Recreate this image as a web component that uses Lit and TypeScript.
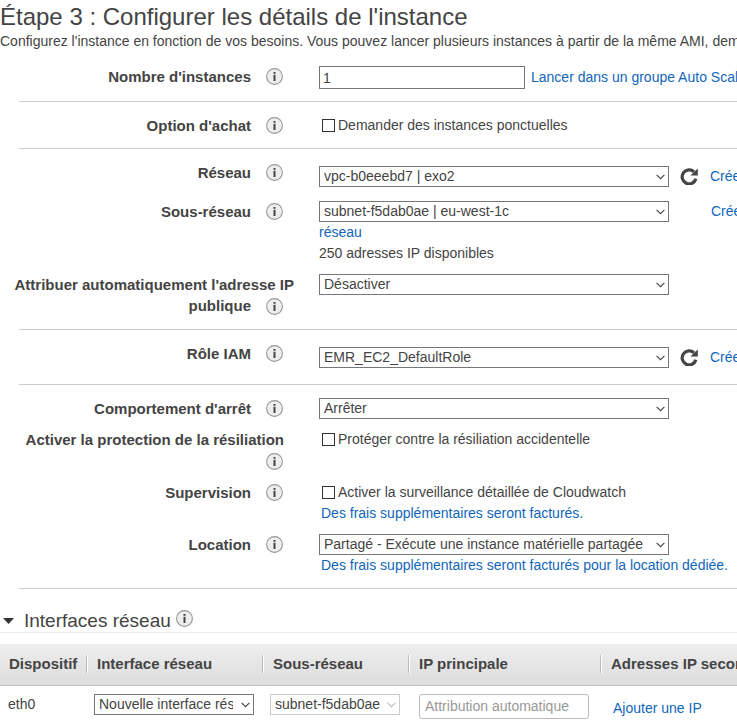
import { LitElement, html, css, svg, nothing, type TemplateResult } from "lit";
import { customElement, property } from "lit/decorators.js";

const chevron = html`<svg class="chevron" viewBox="0 0 9 6" aria-hidden="true">
  <path d="M0.6 0.8 L4.5 4.7 L8.4 0.8" fill="none" stroke="currentColor" stroke-width="1.1" />
</svg>`;

const infoButton = html`<button class="info" type="button" aria-label="Informations">
  <svg viewBox="0 0 17 17" aria-hidden="true">
    <circle cx="8.5" cy="8.5" r="7.9" fill="#eeeeee" stroke="#999999" stroke-width="1.1" />
    <rect x="7.5" y="4" width="2" height="1.8" fill="#444444" />
    <rect x="7.5" y="6.8" width="2" height="6.2" fill="#444444" />
  </svg>
</button>`;

const refreshButton = html`<button class="refresh" type="button" aria-label="Actualiser">
  <svg viewBox="0 0 18 17" aria-hidden="true">
    <path d="M15.9 10.8 A7 7 0 1 1 14 3.8" fill="none" stroke="#444444" stroke-width="3.2" />
    <path d="M17.8 0.4 V7.4 H10.4 Z" fill="#444444" />
  </svg>
</button>`;

const controlStyles = css`
  * {
    box-sizing: border-box;
  }
  a {
    color: #1166bb;
    text-decoration: none;
  }
  button {
    margin: 0;
    padding: 0;
    border: 0;
    background: none;
    color: inherit;
    font: inherit;
    cursor: pointer;
  }
  svg {
    display: block;
  }
  .info {
    flex: none;
    width: 17px;
    height: 17px;
  }
  .info svg {
    width: 17px;
    height: 17px;
  }
  .select {
    position: relative;
    display: block;
    flex: none;
  }
  select {
    display: block;
    width: 100%;
    height: 21px;
    margin: 0;
    padding: 0 20px 0 4px;
    border: 1px solid #777777;
    border-radius: 0;
    background: #ffffff;
    color: #444444;
    font: inherit;
    line-height: 19px;
    appearance: none;
  }
  .chevron {
    position: absolute;
    top: 8px;
    right: 4px;
    width: 9px;
    height: 6px;
    color: #444444;
    pointer-events: none;
  }
  select:disabled {
    padding-right: 16px;
    border-color: #cccccc;
    opacity: 1;
  }
  select:disabled + .chevron {
    color: #bbbbbb;
  }
`;

@customElement("form-row")
class FormRow extends LitElement {
  @property() label = "";
  @property({ type: Boolean }) offset = false;

  static styles = [
    controlStyles,
    css`
      :host {
        display: grid;
        grid-template-columns: 275px minmax(0, 1fr);
        column-gap: 25px;
      }
      .caption {
        display: flex;
        flex-wrap: wrap;
        justify-content: flex-end;
        align-items: flex-start;
        font-size: 15px;
        font-weight: bold;
        text-align: right;
        white-space: nowrap;
      }
      .text {
        margin-right: 10px;
      }
      .long {
        margin-right: 0;
      }
      .last {
        margin-right: 15px;
      }
      .mark {
        display: flex;
        height: 21px;
        align-items: center;
        margin-right: 11px;
      }
      .wrapped {
        height: 22px;
      }
      .field {
        white-space: nowrap;
      }
      .field.offset {
        padding: 4px 0;
      }
    `,
  ];

  render() {
    const lines = this.label.split("|");
    const wrapped = lines.length > 1;
    return html`<div class="caption">
        ${lines.map((line, i) => {
          if (line === "") return nothing;
          const last = i === lines.length - 1;
          const kind = last ? "text last" : lines[i + 1] ? "text long" : "text";
          return html`<span class=${kind}>${line}</span>`;
        })}
        <span class=${wrapped ? "mark wrapped" : "mark"}>${infoButton}</span>
      </div>
      <div class=${this.offset ? "field offset" : "field"}><slot></slot></div>`;
  }
}

@customElement("app-root")
class AppRoot extends LitElement {
  static styles = [
    controlStyles,
    css`
      :host {
        display: block;
        overflow: hidden;
        background: #ffffff;
        color: #444444;
        font: 14px/21px "Liberation Sans", Arial, sans-serif;
      }
      h1 {
        margin: 0;
        padding-top: 2px;
        font-size: 24px;
        line-height: 30px;
        font-weight: normal;
        white-space: nowrap;
      }
      .intro {
        margin: 0;
        padding-bottom: 2px;
        line-height: 19px;
        white-space: nowrap;
      }
      .group {
        display: grid;
        row-gap: 10px;
        margin-left: 19px;
        padding: 13px 0 12px;
        border-bottom: 1px solid #cccccc;
      }
      .line {
        display: flex;
        align-items: center;
      }
      .wide {
        width: 350px;
      }
      .count {
        flex: none;
        width: 206px;
        height: 23px;
        margin: 0 6px 0 0;
        padding: 0 3px;
        border: 1px solid #777777;
        background: #ffffff;
        color: #444444;
        font: inherit;
      }
      .refresh {
        flex: none;
        width: 18px;
        height: 17px;
        margin: 0 12px 0 11px;
      }
      .refresh svg {
        width: 18px;
        height: 17px;
      }
      .far {
        margin-left: 42px;
      }
      .check {
        display: flex;
        align-items: center;
        gap: 3px;
        padding-left: 3px;
      }
      .check input {
        width: 13px;
        height: 13px;
        margin: 0;
        border: 1px solid #333333;
        background: #ffffff;
        appearance: none;
      }
      .check input:checked {
        background: #444444;
      }
      .note {
        display: block;
        padding-left: 2px;
      }
      .section {
        display: flex;
        align-items: flex-start;
        margin: 0;
        padding: 21px 0 0 3px;
        border-bottom: 1px solid #eaeaea;
      }
      .section h2 {
        margin: 0 5px 0 0;
        font-size: 19px;
        line-height: 22px;
        font-weight: normal;
      }
      .toggle {
        display: flex;
        align-items: center;
        gap: 10px;
      }
      .toggle svg {
        width: 11px;
        height: 6px;
      }
      table {
        width: 800px;
        margin-top: 11px;
        border-collapse: collapse;
        table-layout: fixed;
        white-space: nowrap;
      }
      .device {
        width: 86px;
      }
      .interface {
        width: 176px;
      }
      .subnet {
        width: 146px;
      }
      .primary {
        width: 192px;
      }
      th {
        height: 41px;
        padding: 0;
        border-bottom: 1px solid #c4c4c4;
        font-size: 15px;
        text-align: left;
      }
      thead {
        background: linear-gradient(#eeeeee, #dddddd);
      }
      th span {
        display: block;
        padding-left: 9px;
        line-height: 18px;
      }
      th + th span {
        border-left: 1px solid #bbbbbb;
        box-shadow: inset 1px 0 #ffffff;
        padding-left: 10px;
      }
      td {
        padding: 8px 8px 0;
        vertical-align: top;
      }
      .ip-cell {
        padding-left: 11px;
      }
      .add-cell {
        padding: 12px 0 0 13px;
      }
      .ip {
        display: block;
        width: 170px;
        height: 25px;
        margin: 0;
        padding: 0 5px;
        border: 1px solid #bbbbbb;
        border-radius: 3px;
        background: #ffffff;
        color: #444444;
        font: inherit;
      }
      .ip::placeholder {
        color: #999999;
        opacity: 1;
      }
    `,
  ];

  private select(name: string, value: string, wide = true, disabled = false): TemplateResult {
    return html`<span class=${wide ? "select wide" : "select"}>
      <select aria-label=${name} ?disabled=${disabled}>
        <option>${value}</option>
      </select>
      ${chevron}
    </span>`;
  }

  private check(text: string): TemplateResult {
    return html`<label class="check"><input type="checkbox" />${text}</label>`;
  }

  render() {
    return html`
      <h1>Étape 3 : Configurer les détails de l'instance</h1>
      <p class="intro">
        Configurez l'instance en fonction de vos besoins. Vous pouvez lancer plusieurs instances à
        partir de la même AMI, demander
      </p>
      <form>
        <div class="group">
          <form-row label="Nombre d'instances">
            <div class="line">
              <input class="count" type="text" value="1" aria-label="Nombre d'instances" />
              <a href="#">Lancer dans un groupe Auto Scaling</a>
            </div>
          </form-row>
        </div>
        <div class="group">
          <form-row label="Option d'achat">${this.check("Demander des instances ponctuelles")}</form-row>
        </div>
        <div class="group">
          <form-row label="Réseau" offset>
            <div class="line">
              ${this.select("Réseau", "vpc-b0eeebd7 | exo2")} ${refreshButton}
              <a href="#">Créer</a>
            </div>
          </form-row>
          <form-row label="Sous-réseau">
            <div class="line">
              ${this.select("Sous-réseau", "subnet-f5dab0ae | eu-west-1c")}
              <a class="far" href="#">Créer</a>
            </div>
            <div><a href="#">réseau</a></div>
            <div>250 adresses IP disponibles</div>
          </form-row>
          <form-row label="Attribuer automatiquement l'adresse IP|publique">
            ${this.select("Attribuer automatiquement l'adresse IP publique", "Désactiver")}
          </form-row>
        </div>
        <div class="group">
          <form-row label="Rôle IAM" offset>
            <div class="line">
              ${this.select("Rôle IAM", "EMR_EC2_DefaultRole")} ${refreshButton}
              <a href="#">Créer</a>
            </div>
          </form-row>
        </div>
        <div class="group">
          <form-row label="Comportement d'arrêt">
            ${this.select("Comportement d'arrêt", "Arrêter")}
          </form-row>
          <form-row label="Activer la protection de la résiliation|">
            ${this.check("Protéger contre la résiliation accidentelle")}
          </form-row>
          <form-row label="Supervision">
            ${this.check("Activer la surveillance détaillée de Cloudwatch")}
            <a class="note" href="#">Des frais supplémentaires seront facturés.</a>
          </form-row>
          <form-row label="Location">
            ${this.select("Location", "Partagé - Exécute une instance matérielle partagée")}
            <a class="note" href="#">Des frais supplémentaires seront facturés pour la location dédiée.</a>
          </form-row>
        </div>
      </form>
      <div class="section">
        <h2>
          <button class="toggle" type="button" aria-expanded="true">
            <svg viewBox="0 0 11 6" aria-hidden="true">${svg`<path d="M0 0 H11 L5.5 6 Z" fill="#333333" />`}</svg>
            Interfaces réseau
          </button>
        </h2>
        ${infoButton}
      </div>
      <table>
        <colgroup>
          <col class="device" />
          <col class="interface" />
          <col class="subnet" />
          <col class="primary" />
          <col />
        </colgroup>
        <thead>
          <tr>
            <th scope="col"><span>Dispositif</span></th>
            <th scope="col"><span>Interface réseau</span></th>
            <th scope="col"><span>Sous-réseau</span></th>
            <th scope="col"><span>IP principale</span></th>
            <th scope="col"><span>Adresses IP secondaires</span></th>
          </tr>
        </thead>
        <tbody>
          <tr>
            <td>eth0</td>
            <td>${this.select("Interface réseau", "Nouvelle interface réseau", false)}</td>
            <td>${this.select("Sous-réseau", "subnet-f5dab0ae", false, true)}</td>
            <td class="ip-cell">
              <input class="ip" type="text" placeholder="Attribution automatique" aria-label="IP principale" />
            </td>
            <td class="add-cell"><a href="#">Ajouter une IP</a></td>
          </tr>
        </tbody>
      </table>
    `;
  }
}
